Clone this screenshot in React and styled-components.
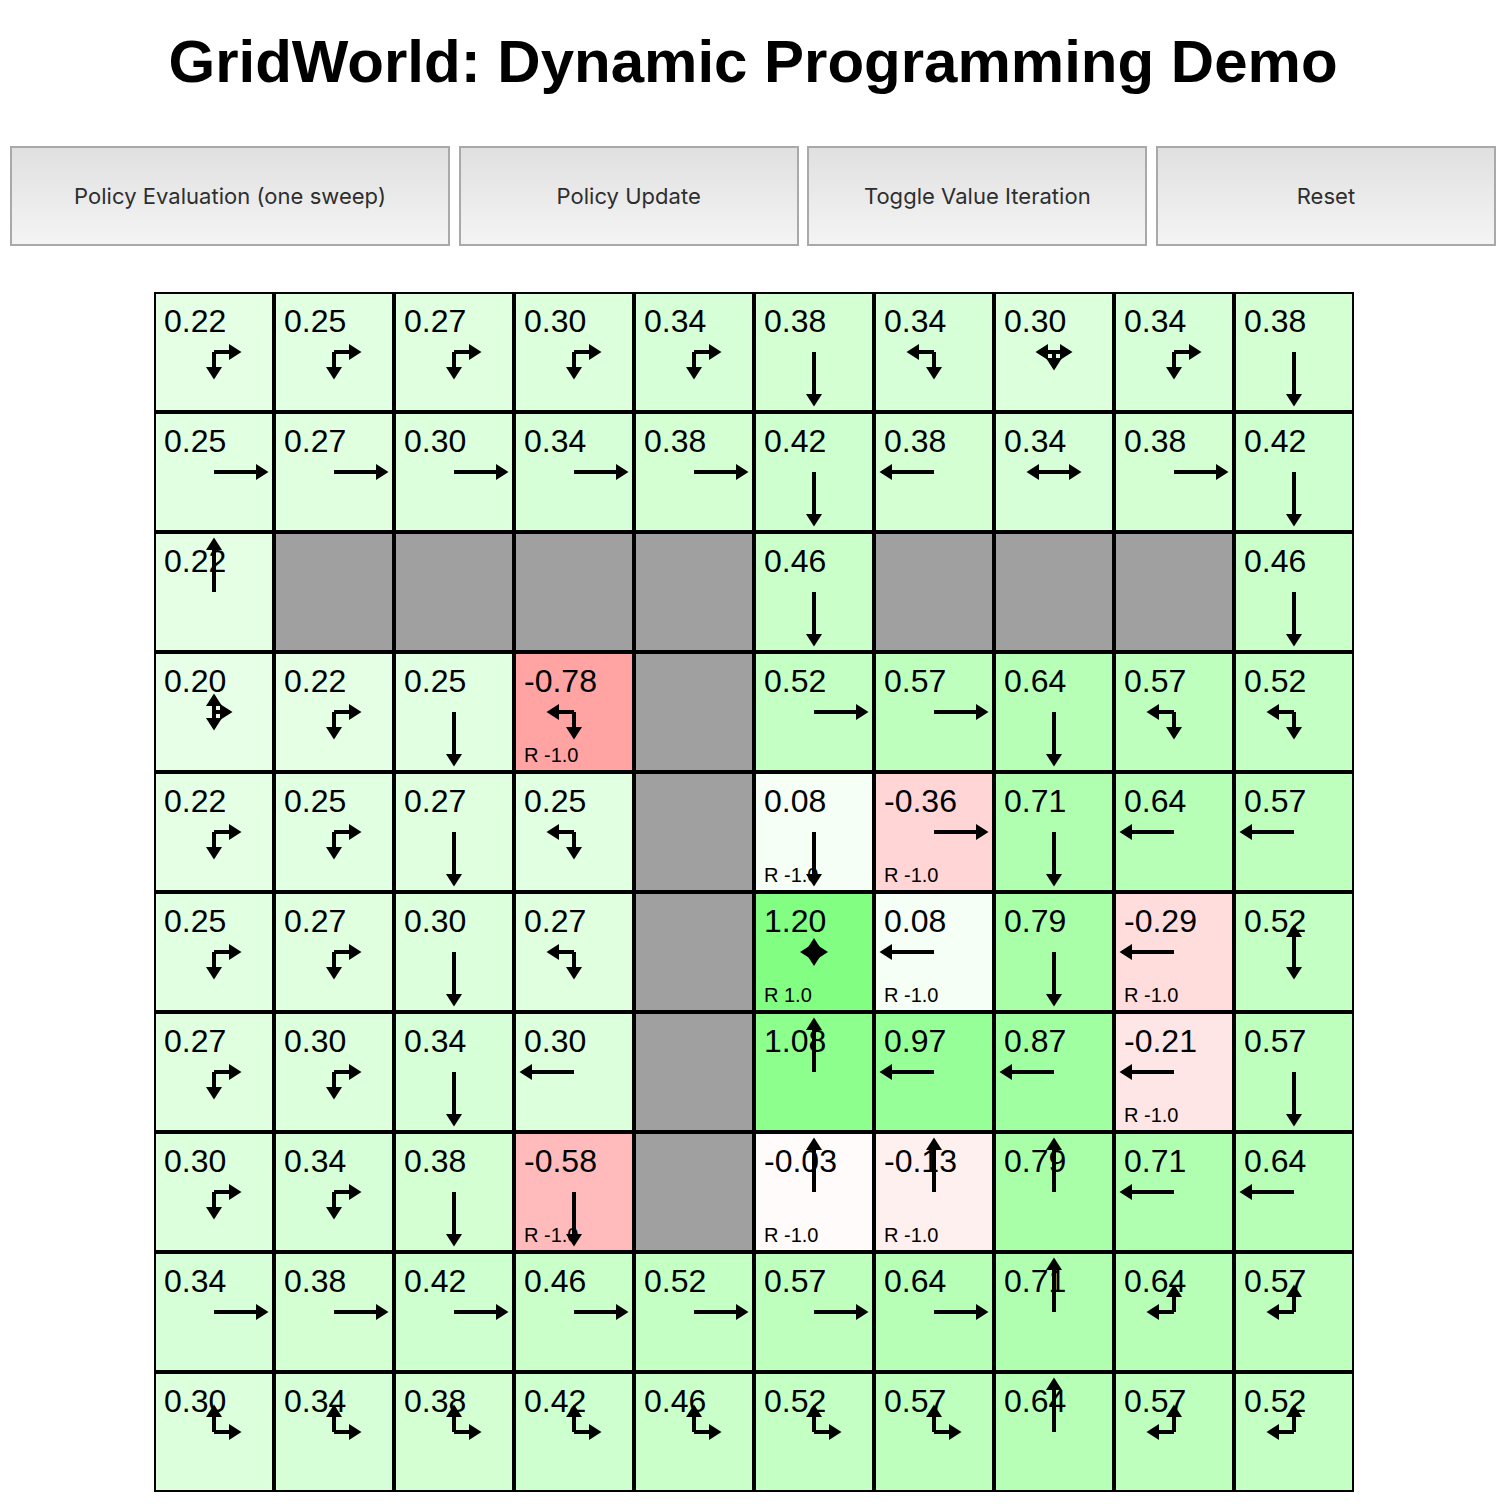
import React from "react";
import styled, { createGlobalStyle } from "styled-components";

const Global = createGlobalStyle`
  html, body { margin: 0; padding: 0; background: #fff; }
  body { font-family: "Liberation Sans", Arial, sans-serif; }
`;

const Page = styled.main`
  width: 1512px;
  height: 1512px;
  padding: 0 16px 0 10px;
  box-sizing: border-box;
  display: flex;
  flex-direction: column;
  align-items: center;
`;

const Title = styled.h1`
  margin: 0;
  padding-top: 25px;
  height: 146px;
  box-sizing: border-box;
  font-size: 60px;
  line-height: 74px;
  font-weight: 700;
  color: #000;
  white-space: nowrap;
`;

const Toolbar = styled.div`
  display: flex;
  justify-content: space-between;
  width: 1486px;
  height: 100px;
`;

const Button = styled.button`
  width: ${(p) => p.$w}px;
  height: 100px;
  box-sizing: border-box;
  border: 2px solid #a9a9a9;
  border-radius: 0;
  padding: 0;
  background: linear-gradient(to bottom, #e0e0e0, #f4f4f4);
  color: #2e2e2e;
  font-family: Inter, "Noto Sans", sans-serif;
  font-size: 22px;
  letter-spacing: 0.03px;
`;

const Grid = styled.div`
  margin-top: 46px;
  display: grid;
  grid-template-columns: repeat(10, 120px);
  grid-auto-rows: 120px;
  transform: translateX(1px);
`;

const Cell = styled.div`
  position: relative;
  box-sizing: border-box;
  border: 2px solid #000;
  background: ${(p) => p.$bg};
  padding: 9px 8px 4px;
  display: flex;
  flex-direction: column;
  justify-content: space-between;
  color: #000;
`;

const Value = styled.div`
  font-size: 32px;
  line-height: 36px;
`;

const Reward = styled.div`
  font-size: 20px;
  line-height: 22px;
`;

const ArrowSvg = styled.svg`
  position: absolute;
  left: 0;
  top: 0;
  width: 116px;
  height: 116px;
  overflow: visible;
  pointer-events: none;
`;

const ANGLE = { R: 0, D: 90, L: 180, U: 270 };

function Arrows({ dirs }) {
  const len = 54 / dirs.length;
  return (
    <ArrowSvg viewBox="-58 -58 116 116">
      {dirs.split("").map((d) => (
        <g key={d} transform={`rotate(${ANGLE[d]})`}>
          <line x1="0" y1="0" x2={len - 10} y2="0" stroke="#000" strokeWidth="4" />
          <polygon points={`${len + 0.5},0 ${len - 12},-8 ${len - 12},8`} fill="#000" />
        </g>
      ))}
    </ArrowSvg>
  );
}

const W = null;
const rows = [
  [["0.22","RD"],["0.25","RD"],["0.27","RD"],["0.30","RD"],["0.34","RD"],["0.38","D"],["0.34","LD"],["0.30","LRD"],["0.34","RD"],["0.38","D"]],
  [["0.25","R"],["0.27","R"],["0.30","R"],["0.34","R"],["0.38","R"],["0.42","D"],["0.38","L"],["0.34","LR"],["0.38","R"],["0.42","D"]],
  [["0.22","U"],W,W,W,W,["0.46","D"],W,W,W,["0.46","D"]],
  [["0.20","URD"],["0.22","RD"],["0.25","D"],["-0.78","LD","R -1.0"],W,["0.52","R"],["0.57","R"],["0.64","D"],["0.57","LD"],["0.52","LD"]],
  [["0.22","RD"],["0.25","RD"],["0.27","D"],["0.25","LD"],W,["0.08","D","R -1.0"],["-0.36","R","R -1.0"],["0.71","D"],["0.64","L"],["0.57","L"]],
  [["0.25","RD"],["0.27","RD"],["0.30","D"],["0.27","LD"],W,["1.20","URDL","R 1.0"],["0.08","L","R -1.0"],["0.79","D"],["-0.29","L","R -1.0"],["0.52","UD"]],
  [["0.27","RD"],["0.30","RD"],["0.34","D"],["0.30","L"],W,["1.08","U"],["0.97","L"],["0.87","L"],["-0.21","L","R -1.0"],["0.57","D"]],
  [["0.30","RD"],["0.34","RD"],["0.38","D"],["-0.58","D","R -1.0"],W,["-0.03","U","R -1.0"],["-0.13","U","R -1.0"],["0.79","U"],["0.71","L"],["0.64","L"]],
  [["0.34","R"],["0.38","R"],["0.42","R"],["0.46","R"],["0.52","R"],["0.57","R"],["0.64","R"],["0.71","U"],["0.64","UL"],["0.57","UL"]],
  [["0.30","UR"],["0.34","UR"],["0.38","UR"],["0.42","UR"],["0.46","UR"],["0.52","UR"],["0.57","UR"],["0.64","U"],["0.57","UL"],["0.52","UL"]],
];

function color(text) {
  const v = parseFloat(text);
  if (v >= 0) {
    const c = Math.round(255 - v * (122 - 15 * v));
    return `rgb(${c},255,${c})`;
  }
  const c = Math.round(255 + v * 118);
  return `rgb(255,${c},${c})`;
}

const buttons = [
  ["Policy Evaluation (one sweep)", 440],
  ["Policy Update", 340],
  ["Toggle Value Iteration", 340],
  ["Reset", 340],
];

export default function App() {
  return (
    <Page>
      <Global />
      <Title>GridWorld: Dynamic Programming Demo</Title>
      <Toolbar>
        {buttons.map(([label, w]) => (
          <Button key={label} $w={w}>{label}</Button>
        ))}
      </Toolbar>
      <Grid>
        {rows.flatMap((row, r) =>
          row.map((cell, c) =>
            cell ? (
              <Cell key={`${r}-${c}`} $bg={color(cell[0])}>
                <Value>{cell[0]}</Value>
                {cell[2] && <Reward>{cell[2]}</Reward>}
                <Arrows dirs={cell[1]} />
              </Cell>
            ) : (
              <Cell key={`${r}-${c}`} $bg="#a0a0a0" />
            )
          )
        )}
      </Grid>
    </Page>
  );
}
